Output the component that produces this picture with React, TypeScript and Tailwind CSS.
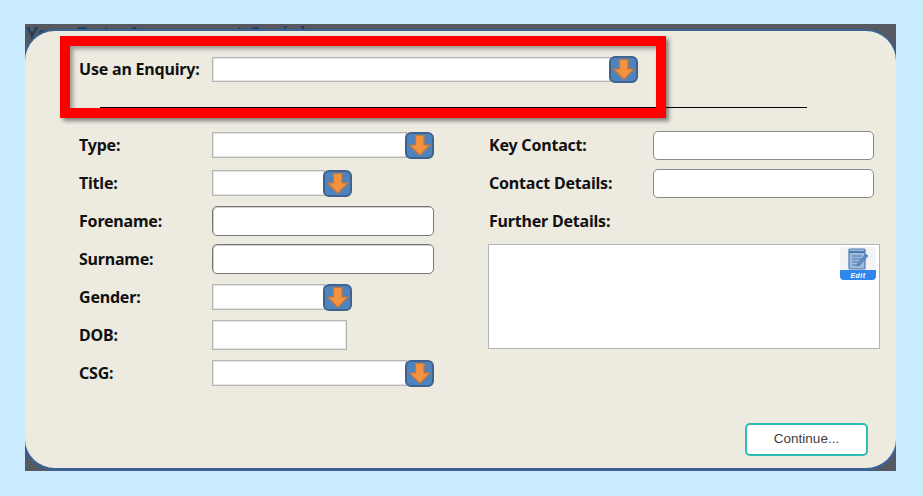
import React from "react";

function Arrow({ className = "" }: { className?: string }) {
  return (
    <div className={`relative z-10 h-[27px] w-[29px] shrink-0 rounded-[6px] border-2 border-[#3f628f] bg-[#4f83bd] ${className}`}>
      <svg viewBox="0 0 25 23" className="h-full w-full">
        <path d="M8.5 1.5h8.5v9.5h6L12.8 21.5 2.5 11h6z" fill="#f3923f" stroke="#c2763c" strokeWidth="1.2" />
      </svg>
    </div>
  );
}

function Label({ children, w = "w-[133px]" }: { children: React.ReactNode; w?: string }) {
  return <div className={`${w} shrink-0 text-[16px] leading-5 font-bold text-[#111] font-['Noto_Sans',sans-serif] tracking-[-0.2px]`}>{children}</div>;
}

const box = "border border-[#b5b5b5] bg-white shadow-[inset_0_0_0_1px_#e4e4e4]";

function Select({ w }: { w: string }) {
  return (
    <div className="flex items-center">
      <div className={`${w} h-[26px] ${box}`} />
      <Arrow className="-ml-[2px]" />
    </div>
  );
}

function RoundInput({ w }: { w: string }) {
  return <div className={`${w} h-[30px] rounded-[5px] border border-[#777777] bg-white shadow-[inset_1px_1px_0_#cfcfcf]`} />;
}

function Row({ label, children }: { label: string; children?: React.ReactNode }) {
  return (
    <div className="flex h-[38px] items-center">
      <Label>{label}</Label>
      {children}
    </div>
  );
}

function EditIcon() {
  return (
    <div className="absolute right-[3px] top-[2px] flex h-[33px] w-[36px] flex-col overflow-hidden rounded-[4px] bg-[#f1f3f6]">
      <div className="flex flex-1 items-center justify-center">
        <svg viewBox="0 0 24 22" className="h-[22px] w-[24px]">
          <rect x="3" y="1" width="16" height="20" rx="1" fill="#9dbbdc" stroke="#4d79ab" strokeWidth="1.2" />
          <path d="M3 4h16" stroke="#4d79ab" strokeWidth="2" />
          <path d="M6 8h10M6 11h10M6 14h7M6 17h7" stroke="#4d79ab" strokeWidth="1" />
          <path d="M12 15l8-9 2 2-8 9-3 1z" fill="#5f8fc4" stroke="#3f6b9e" strokeWidth=".6" />
        </svg>
      </div>
      <div className="flex h-[10px] items-center justify-center bg-[#2f86ee] font-['Liberation_Sans',sans-serif] text-[7px] leading-none font-bold italic tracking-[0.5px] text-white">Edit</div>
    </div>
  );
}

export default function App() {
  return (
    <div className="h-[496px] w-[923px] overflow-hidden bg-[#cbebff] pl-[25px] pt-[24px]">
      <div className="relative h-[447px] w-[871px] overflow-hidden bg-[#565a60]">
        <div className="absolute left-[1px] top-[-4px] whitespace-nowrap font-['Noto_Sans',sans-serif] text-[20px] leading-[28px] font-semibold text-[#1f3f66]">Your Data Assessment Social</div>
        <div className="relative -mx-[2px] mt-[5px] flex h-[442px] flex-col rounded-[32px] border-2 border-b-[3px] border-[#3b6291] bg-[#edebe0] pl-[54px]">
          <div className="flex h-[76px] items-center">
            <Label>Use an Enquiry:</Label>
            <div className="mt-px h-[25px] w-[399px] border border-[#b5b5b5] bg-white shadow-[inset_0_0_0_1px_#e4e4e4]" />
            <Arrow className="-ml-[2px]" />
          </div>
          <div className="ml-[21px] h-px w-[707px] bg-black" />
          <div className="mt-[18px] flex">
            <div className="w-[410px] shrink-0">
              <Row label="Type:"><Select w="w-[195px]" /></Row>
              <Row label="Title:"><Select w="w-[113px]" /></Row>
              <Row label="Forename:"><RoundInput w="w-[222px]" /></Row>
              <Row label="Surname:"><RoundInput w="w-[222px]" /></Row>
              <Row label="Gender:"><Select w="w-[113px]" /></Row>
              <Row label="DOB:"><div className={`h-[30px] w-[135px] ${box}`} /></Row>
              <Row label="CSG:"><Select w="w-[195px]" /></Row>
            </div>
            <div className="flex-1">
              <div className="flex h-[38px] items-center"><Label w="w-[164px]">Key Contact:</Label><div className="h-[29px] w-[221px] rounded-[5px] border border-[#8a8a8a] bg-white" /></div>
              <div className="flex h-[38px] items-center"><Label w="w-[164px]">Contact Details:</Label><div className="h-[29px] w-[221px] rounded-[5px] border border-[#8a8a8a] bg-white" /></div>
              <div className="flex h-[38px] items-center"><Label w="w-[164px]">Further Details:</Label></div>
              <div className="relative mt-[4px] -ml-px h-[105px] w-[392px] border border-[#b5b5b5] bg-white"><EditIcon /></div>
            </div>
          </div>
          <div className="mt-auto flex justify-end pb-[12px] pr-[28px]">
            <button className="h-[33px] w-[123px] rounded-[5px] border-2 border-[#2dbcb6] bg-white font-['Liberation_Sans',sans-serif] text-[13.5px] text-[#404040]">Continue...</button>
          </div>
        </div>
      </div>
      <div className="absolute left-[60px] top-[36px] h-[82px] w-[606px] border-[10px] border-[#ff0000] shadow-[3px_3px_4px_rgba(0,0,0,0.45),inset_3px_3px_4px_rgba(0,0,0,0.35)]" />
    </div>
  );
}
